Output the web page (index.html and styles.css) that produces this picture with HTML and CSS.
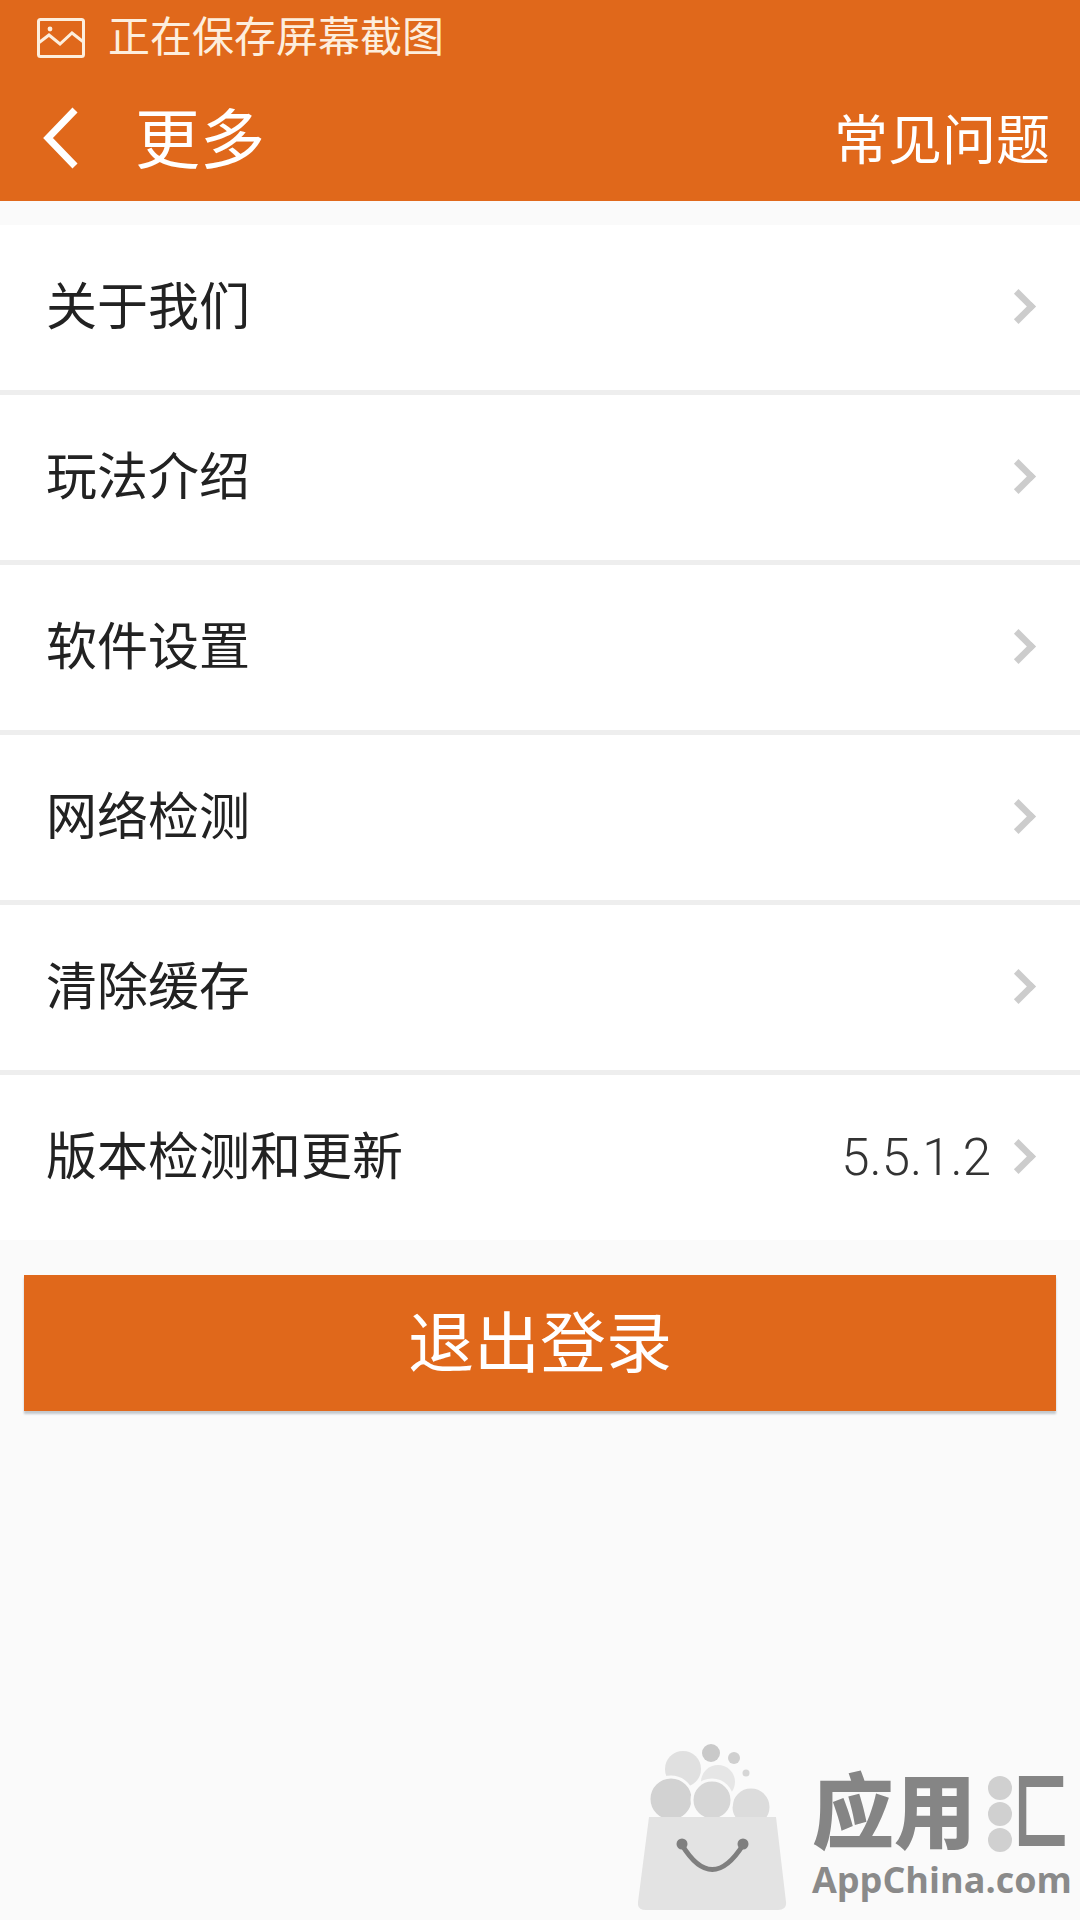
FILE: index.html
```html
<!DOCTYPE html>
<html lang="zh">
<head>
    <meta charset="UTF-8">
    <meta name="viewport" content="width=device-width, initial-scale=1.0">
    <title>更多</title>
    <link rel="stylesheet" href="styles.css">
</head>
<body>
    <div class="screen">
        <div class="top">
            <div class="status">
                <svg class="status-icon" width="48" height="40" viewBox="0 0 48 40" fill="none" stroke="#fdeedd" stroke-width="3">
                    <rect x="1.5" y="1.5" width="45" height="37" rx="2"/>
                    <circle cx="13" cy="11" r="2.4" fill="#fdeedd" stroke="none"/>
                    <path d="M1.5 25 L12 17 L23 26 L35 15 L46.5 24"/>
                </svg>
                <span>正在保存屏幕截图</span>
            </div>
            <div class="titlebar">
                <svg class="back" width="38" height="62" viewBox="0 0 38 62" fill="none" stroke="#fff" stroke-width="7">
                    <path d="M34 3 L7 31 L34 59"/>
                </svg>
                <h1>更多</h1>
                <a class="faq">常见问题</a>
            </div>
        </div>

        <div class="list">
            <div class="row"><span>关于我们</span><i class="arrow"></i></div>
            <div class="row"><span>玩法介绍</span><i class="arrow"></i></div>
            <div class="row"><span>软件设置</span><i class="arrow"></i></div>
            <div class="row"><span>网络检测</span><i class="arrow"></i></div>
            <div class="row"><span>清除缓存</span><i class="arrow"></i></div>
            <div class="row"><span>版本检测和更新</span><em class="version">5.5.1.2</em><i class="arrow"></i></div>
        </div>

        <button class="logout">退出登录</button>

        <div class="watermark">
            <svg class="bag" width="150" height="168" viewBox="0 0 150 168">
                <circle cx="73" cy="9" r="9" fill="#c9c9c9"/>
                <circle cx="96" cy="14" r="6" fill="#cfcfcf"/>
                <circle cx="108" cy="29" r="3.5" fill="#d6d6d6"/>
                <circle cx="45" cy="25" r="18" fill="#e0e0e0"/>
                <circle cx="80" cy="38" r="17" fill="#e6e6e6"/>
                <g stroke="#fafafa" stroke-width="3">
                    <circle cx="33" cy="55" r="22" fill="#d2d2d2"/>
                    <circle cx="113" cy="63" r="20" fill="#dcdcdc"/>
                    <circle cx="74" cy="56" r="20" fill="#d6d6d6"/>
                </g>
                <path d="M11 73 H138 L148 158 Q149 166 140 166 H8 Q-1 166 0 158 Z" fill="#e3e3e3"/>
                <path d="M44 101 Q74 150 105 101" fill="none" stroke="#7f7f7f" stroke-width="5"/>
                <circle cx="44" cy="100" r="5.5" fill="#7f7f7f"/>
                <circle cx="105" cy="100" r="5.5" fill="#7f7f7f"/>
            </svg>
            <div class="wm-text">
                <div class="wm-name">
                    <span>应用</span>
                    <div class="wm-dots"><i></i><i></i><i></i></div>
                    <span class="wm-last">匚</span>
                </div>
                <div class="wm-site">AppChina.com</div>
            </div>
        </div>
    </div>
</body>
</html>
```

FILE: styles.css
```css
* {
    box-sizing: border-box;
}
html, body {
    margin: 0;
    padding: 0;
}
body {
    font-family: Roboto, "Noto Sans CJK SC", sans-serif;
    background-color: #fafafa;
}
.screen {
    position: relative;
    width: 1080px;
    height: 1920px;
    overflow: hidden;
    background-color: #fafafa;
}
.top {
    height: 201px;
    background-color: #e0681b;
    color: white;
}
.status {
    display: flex;
    align-items: center;
    height: 75px;
    padding: 0 0 0 37px;
    color: #fdeedd;
    font-size: 42px;
    line-height: 1;
}
.status-icon {
    margin-right: 23px;
}
.titlebar {
    display: flex;
    align-items: center;
    height: 126px;
    padding: 0 30px 0 41px;
}
.back {
    flex: none;
}
.titlebar h1 {
    margin: 7px 0 0 56px;
    font-size: 65px;
    font-weight: 400;
    line-height: 1;
}
.faq {
    margin: 7px 0 0 auto;
    font-size: 54px;
    line-height: 1;
}
.list {
    margin-top: 24px;
}
.row {
    display: flex;
    align-items: center;
    height: 170px;
    padding: 0 45px 0 46px;
    background-color: white;
    border-bottom: 5px solid #eeeeee;
    color: #222222;
    font-size: 51px;
    line-height: 1;
}
.row:last-child {
    height: 165px;
    border-bottom: none;
}
.version {
    margin: 0 18px 0 auto;
    color: #333333;
    font-size: 51px;
    font-style: normal;
    font-weight: 300;
}
.arrow {
    flex: none;
    width: 19px;
    height: 19px;
    margin-left: auto;
    margin-right: 7px;
    margin-bottom: 2px;
    border-top: 5px solid #cccccc;
    border-right: 5px solid #cccccc;
    transform: rotate(45deg) scale(1.3);
}
.version + .arrow {
    margin-left: 0;
}
.logout {
    display: block;
    width: 1032px;
    height: 136px;
    margin: 35px 24px 0;
    padding: 4px 0 0;
    background-color: #e0681b;
    color: white;
    border: none;
    box-shadow: 0 3px 2px #c4c8cc;
    font-family: inherit;
    font-size: 66px;
    line-height: 1;
    cursor: pointer;
}
.watermark {
    position: absolute;
    left: 638px;
    top: 1744px;
    display: flex;
    width: 442px;
}
.bag {
    flex: none;
}
.wm-text {
    margin-left: 24px;
    padding-top: 28px;
}
.wm-name {
    display: flex;
    align-items: center;
    height: 84px;
    color: #858585;
    font-size: 82px;
    font-weight: 900;
    line-height: 1;
    white-space: nowrap;
}
.wm-dots {
    display: flex;
    flex-direction: column;
    gap: 2px;
    margin: 0 0 0 12px;
}
.wm-dots i {
    display: block;
    width: 24px;
    height: 24px;
    border-radius: 50%;
    background-color: #d0d0d0;
}
.wm-last {
    width: 52px;
    margin-left: 2px;
    transform: scaleX(0.66);
    transform-origin: left center;
}
.wm-site {
    margin-top: 6px;
    color: #8a8a8a;
    font-family: "Open Sans", sans-serif;
    font-size: 36px;
    font-weight: 700;
    line-height: 1;
    white-space: nowrap;
}
```
